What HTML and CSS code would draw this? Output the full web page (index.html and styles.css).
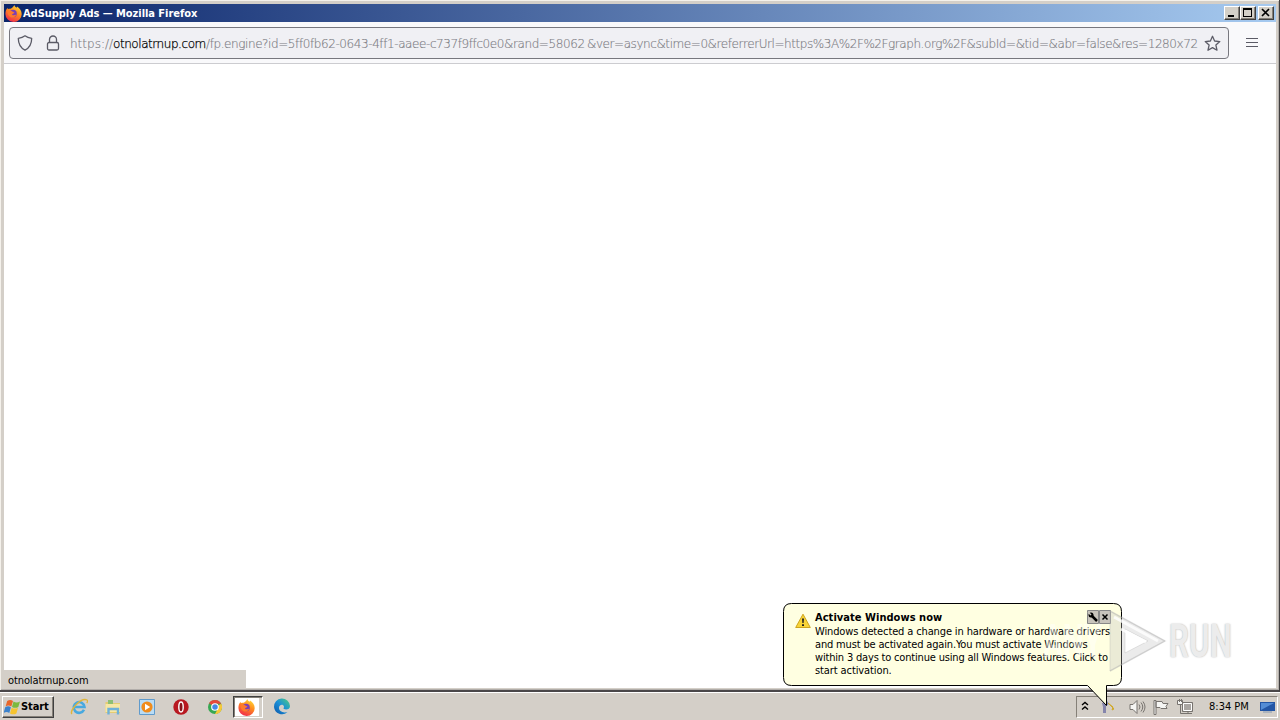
FILE: index.html
```html
<!DOCTYPE html>
<html lang="en">
<head>
<meta charset="utf-8">
<title>AdSupply Ads — Mozilla Firefox</title>
<link rel="stylesheet" href="styles.css">
</head>
<body>
<svg width="0" height="0" class="defs">
  <defs>
    <linearGradient id="fox" x1="0.8" y1="0" x2="0.3" y2="1"><stop offset="0" stop-color="#ffe03a"/><stop offset=".45" stop-color="#ff8a1e"/><stop offset="1" stop-color="#f0284f"/></linearGradient>
    <linearGradient id="edge" x1="0" y1="1" x2="1" y2="0"><stop offset="0" stop-color="#0b56a8"/><stop offset=".5" stop-color="#1b8fd8"/><stop offset="1" stop-color="#4fd07c"/></linearGradient>
    <symbol id="firefox" viewBox="0 0 16 16">
      <path d="M8.800 0c.3 1.300 1.200 2 2.300 2.600 0-.5 0-.9.2-1.200 2.700 1.600 4.400 4 4.400 7.100A7.600 7.400 0 0 1 8 16 7.600 7.600 0 0 1 .4 8.300C.4 6 1.200 4 2.400 2.700c0 .5.1.8.4 1.200.7-.4 1.500-.5 2.200-.3C5.700 3.400 7.800 2.200 8.800 0z" fill="url(#fox)"/>
      <circle cx="7.600" cy="8" r="3.500" fill="#7b3fb5"/>
      <path d="M2.500 5.500c2-.7 3.500-.2 4.800.8 1 .2 1.500.5 1.600 1-.8.8-2 .8-2.300 1.800 1.200.9 2.600.4 3.900 0-.7 2-2.600 2.900-4.400 2.600C3.500 11.200 2 8.500 2.500 5.500z" fill="#ff7a2b"/>
    </symbol>
  </defs>
</svg>
<div class="desktop">
  <div class="window">
    <header class="titlebar">
      <svg class="app-icon" width="17" height="17"><use href="#firefox"/></svg>
      <span class="title">AdSupply Ads — Mozilla Firefox</span>
      <div class="controls">
        <span class="ctl"><svg width="14" height="12"><path d="M3 8h6v2H3z"/></svg></span>
        <span class="ctl"><svg width="14" height="12"><path d="M2 1h9v9H2zM3 3v6h7V3z" fill-rule="evenodd"/></svg></span>
        <span class="ctl close"><svg width="14" height="12"><path d="M3 2l7 7M10 2L3 9" stroke="#000" stroke-width="1.700"/></svg></span>
      </div>
    </header>
    <nav class="toolbar">
      <div class="urlbar">
        <svg class="line-icon shield" width="16" height="16" viewBox="0 0 16 16"><path d="M8 .8C6 2.400 3.800 3 1.300 3.300c0 5 1 9 6.700 11.900 5.700-2.900 6.700-6.900 6.700-11.900C12.200 3 10 2.400 8 .8z"/></svg>
        <svg class="line-icon lock" width="14" height="16" viewBox="0 0 14 16"><rect x="1.500" y="7.500" width="11" height="7.500" rx="1.500"/><path d="M3.500 7.500V4.500a3.500 3.500 0 0 1 7 0v3"/></svg>
        <div class="url"><span class="scheme">https://</span><span class="host">otnolatrnup.com</span><span class="path">/fp.engine?id=5ff0fb62-0643-4ff1-aaee-c737f9ffc0e0&amp;rand=58062</span><span class="query">&amp;ver=async&amp;time=0&amp;referrerUrl=https%3A%2F%2Fgraph.org%2F&amp;subId=&amp;tid=&amp;abr=false&amp;res=1280x72</span></div>
        <svg class="line-icon star" width="17" height="17" viewBox="0 0 17 17"><path d="M8.500 1.300l2.100 4.700 5.200.6-3.900 3.500 1.100 5.100-4.500-2.600L4 15.200l1.100-5.100L1.200 6.600l5.200-.6z"/></svg>
      </div>
      <svg class="menu" width="12" height="10"><path d="M0 .5h12M0 4.500h12M0 8.500h12"/></svg>
    </nav>
    <main class="page"><div class="status"><span>otnolatrnup.com</span></div></main>
  </div>
  <footer class="taskbar">
    <div class="start">
      <svg width="17" height="16" viewBox="0 0 17 16"><path d="M3.200 2q3-2 5.800 0L7.300 7.500q-3-1.800-5.700 0z" fill="#e8662a"/><path d="M9.500 2.500q3 1.800 6.500 0L14.300 8q-3 1.700-6.300 0z" fill="#7cb93e"/><path d="M1.200 8.200q3-1.800 5.700 0L5.300 14q-2.800-2-5.700 0z" fill="#3c82cc"/><path d="M7.700 8.700q3 1.700 6.300 0L12.400 14.500q-3 1.700-6.400 0z" fill="#f6c42f"/></svg>
      <span>Start</span>
    </div>
    <div class="pins">
      <svg width="18" height="18" viewBox="0 0 18 18"><path d="M14 11.800A5.400 5.400 0 1 1 14.500 9H5" fill="none" stroke="#48a9df" stroke-width="2.600"/><path d="M2 16C-1 13 11-1 17 2c1 .6.500 2-.3 3" fill="none" stroke="#e0b53b" stroke-width="1.300"/></svg>
      <svg width="18" height="18" viewBox="0 0 18 18"><path d="M1.500 4h5l1 1h8.500v10H1.500z" fill="#e5cc72"/><path d="M4 2h5v4H4z" fill="#8dbf74"/><path d="M1.500 6h14.500v8H1.500z" fill="#f6e7a5"/><path d="M4.500 16.500v-5.500h9.500v5.500" fill="none" stroke="#6fb1d8" stroke-width="2.400"/></svg>
      <svg width="18" height="18" viewBox="0 0 18 18"><path d="M1.500 1.500h15v15h-15z" fill="#b9dcf5" stroke="#609bcc"/><circle cx="9" cy="9" r="5.600" fill="#f08c1c"/><path d="M7 5.700l5.200 3.300L7 12.300z" fill="#fff"/></svg>
      <svg width="18" height="18" viewBox="0 0 18 18"><circle cx="9" cy="9" r="7.700" fill="#b81820"/><ellipse cx="9" cy="9" rx="2.200" ry="5" fill="#87131a" stroke="#fff" stroke-width="1.400"/></svg>
      <svg width="18" height="18" viewBox="0 0 18 18"><circle cx="9" cy="9" r="7" fill="#36a852"/><path d="M9 9L3 5.300A7 7 0 0 1 15.200 5.800H9z" fill="#e5483b"/><path d="M9 9l6.300-3.200A7 7 0 0 1 9 16l3-5.500z" fill="#f7c838"/><circle cx="9" cy="9" r="3.300" fill="#4488e6" stroke="#fff" stroke-width="1.100"/></svg>
      <div class="active"><svg width="17" height="17"><use href="#firefox"/></svg></div>
      <svg width="18" height="18" viewBox="0 0 18 18"><path d="M1 9a8 8 0 0 1 16-1c.2 3.500-4 4-6 3-.9-.5 0-1.200 0-2.300C10.500 6 6.500 6.200 6 9.500c-.3 3.500 4 6 8.500 4.500A8 8 0 0 1 1 9z" fill="url(#edge)"/></svg>
    </div>
    <div class="tray">
      <svg class="chev" width="8" height="10"><path d="M1 4l3-2.500L7 4M1 8.500L4 6l3 2.500"/></svg>
      <svg class="keys" width="16" height="16" viewBox="0 0 16 16"><path d="M1 4l5-2 2 3-3 2v7H2V8z" fill="#8585ac"/><path d="M7 4l6 6-2 1 1-3z" fill="#f2cf39" stroke="#cfa92d"/></svg>
      <svg class="sound tray-icon" width="17" height="16" viewBox="0 0 17 16"><path d="M1 5.500h3l4-4v13l-4-4H1z"/><path d="M10 5.500q2 2.500 0 5M12 3.500q3.500 4.500 0 9M14 2.500q4 5.500 0 11" fill="none"/></svg>
      <svg class="flag tray-icon" width="16" height="16" viewBox="0 0 16 16"><path d="M1 1.500h2v14H1zM3 2.500h6l1 2h5l-2 3 1 2H8l-1-1H3z"/></svg>
      <svg class="net tray-icon" width="16" height="16" viewBox="0 0 16 16"><path d="M5.500 3.500h10v9h-10z" fill="#aaa6a2"/><path d="M6.500 4.500h8v7h-8z" class="inner"/><path d="M7 14.500h8M11 12.500v2M3.500 5.500v9H7" fill="none"/><path d="M.5 1.500h5v4h-5zM2.500 0v3M4.500 0v3"/></svg>
      <span class="clock">8:34 PM</span>
      <svg class="show" width="15" height="12" viewBox="0 0 15 12"><path d="M0 1h15v9H0z" fill="#2356a5"/><path d="M1 2h13L1 9z" fill="#548dd5"/><path d="M3 10h9v2H3z" fill="#adb4bd"/></svg>
    </div>
  </footer>
  <aside class="balloon">
    <svg class="shape" width="340" height="104"><path d="M8.500.5h322q8 0 8 8v66q0 8-8 8h-7v20l-19-20h-296q-8 0-8-8v-66q0-8 8-8z"/></svg>
    <svg class="warn" width="16" height="16" viewBox="0 0 16 16"><path d="M8 1.200L15.300 14.500H.7z" fill="#f8d437" stroke="#cda31d" stroke-linejoin="round"/><path d="M7 5.500h2l-.4 4.500H7.400zM7 11.200h2v1.900H7z" fill="#222"/></svg>
    <div class="message">
      <strong class="l0">Activate Windows now</strong>
      <span class="l1">Windows detected a change in hardware or hardware drivers</span>
      <span class="l2">and must be activated again.You must activate Windows</span>
      <span class="l3">within 3 days to continue using all Windows features. Click to</span>
      <span class="l4">start activation.</span>
    </div>
    <div class="tools">
      <svg width="12" height="14"><path d="M.5.500h11v13H.5z"/><path d="M4 5l6 6" stroke="#000" stroke-width="2.500"/><circle cx="4" cy="5" r="2.500" fill="#000" stroke="none"/><path d="M1 2l3 3" stroke="#c8c4bc" stroke-width="1.500"/></svg>
      <svg width="12" height="14"><path d="M.5.500h11v13H.5z"/><path d="M3.500 4.500l5 5M8.500 4.500l-5 5" stroke="#000" stroke-width="1.500"/></svg>
    </div>
  </aside>
  <div class="watermark">
    <span class="any">ANY</span>
    <svg width="62" height="64" viewBox="0 0 62 64"><path d="M3 2v60l55-30zM18 20v24l23-12z"/><path d="M7 8l44 24M14 20l25 13" class="hi"/><path d="M3 2l55 30L3 62" class="rim"/></svg>
    <span class="run">RUN</span>
  </div>
</div>
</body>
</html>
```
FILE: styles.css
```css
* { box-sizing: border-box; }
body { margin: 0; overflow: hidden; font-family: "DejaVu Sans Condensed", "DejaVu Sans", sans-serif; font-stretch: condensed; font-size: 11px; color: #000; }
svg { display: block; flex: none; }
.defs { position: absolute; }
.desktop { position: relative; width: 1280px; height: 720px; background: #d4cfc8; display: flex; flex-direction: column; overflow: hidden; }
.window { height: 692px; padding: 4px 3px 2px 4px; display: flex; flex-direction: column; border-right: 1px solid #403e3e; border-bottom: 2px solid #4a4749; box-shadow: inset 1px 1px #f4f1eb, inset -1px -1px #b2aeaa; }
.titlebar { height: 18px; display: flex; align-items: center; background: linear-gradient(90deg, #0a246a, #a6caf0); padding: 0 2px 0 1px; color: #fff; flex: none; }
.title { margin-left: 1px; font-weight: bold; letter-spacing: -0.05px; white-space: nowrap; }
.controls { margin-left: auto; display: flex; }
.ctl { width: 16px; height: 14px; background: #d4d0c8; border: 1px solid; border-color: #fff #404040 #404040 #fff; box-shadow: inset -1px -1px #858078; }
.close { margin-left: 2px; }
.toolbar { height: 42px; display: flex; align-items: center; background: #f9f9fb; border-bottom: 1px solid #ccccd0; padding-left: 5px; flex: none; }
.urlbar { width: 1220px; height: 32px; display: flex; align-items: center; background: #f0f0f4; border: 1px solid #77777e; border-radius: 4px; padding: 1px 7px 0; }
.line-icon { fill: none; stroke: #5b5b66; stroke-width: 1.3; stroke-linejoin: round; }
.lock { margin-left: 13px; }
.url { margin-left: 10px; width: 1129px; overflow: hidden; white-space: nowrap; display: flex; font-family: "DejaVu Sans", sans-serif; font-stretch: normal; font-weight: 200; font-size: 12px; color: #7c7c83; -webkit-text-stroke: .15px; line-height: 20px; padding-top: 1px; }
.url span { flex: none; }
.scheme { width: 43px; letter-spacing: 0; }
.host { width: 93px; color: #000; letter-spacing: -0.44px; -webkit-text-stroke: .25px #000; }
.path { width: 381px; letter-spacing: -0.41px; }
.query { letter-spacing: -0.43px; }
.star { margin-left: 5px; }
.menu { margin-left: 17px; stroke: #5b5b66; }
.page { flex: 1; background: #fff; display: flex; align-items: flex-end; }
.status { width: 242px; height: 18px; background: #d4cfc8; padding: 4px 3px 0 4px; line-height: 13px; letter-spacing: -.1px; }
.taskbar { height: 28px; display: flex; align-items: center; border-top: 1px solid #fff; padding: 0 2px; }
.start { width: 52px; height: 22px; display: flex; align-items: center; padding-left: 1px; font-weight: bold; border: 1px solid; border-color: #fff #404040 #404040 #fff; box-shadow: inset -1px -1px #858078; letter-spacing: -.1px; }
.pins { display: flex; align-items: center; margin-left: 16px; gap: 15.9px; }
.active { width: 30px; height: 22px; background: #fff; border: 1px solid; border-color: #404040 #fff #fff #404040; box-shadow: inset 1px 1px #858078, inset -3px -1px #d4cfc8; padding: 2px 0 0 4px; margin: 0 -6px; }
.tray { margin-left: auto; width: 202px; height: 22px; display: flex; align-items: center; border: 1px solid; border-color: #858078 #fff #fff #858078; padding-left: 4px; }
.chev { fill: none; stroke: #000; stroke-width: 1.4; margin-bottom: 2px; }
.keys { margin-left: 12px; }
.sound { margin-left: 12px; }
.tray-icon { fill: #f5f5f3; stroke: #77736f; }
.inner { fill: none; stroke: #fff; }
.flag { margin-left: 7px; }
.net { margin-left: 8px; }
.clock { margin-left: 16px; width: 51px; white-space: nowrap; letter-spacing: 0; }
.balloon { position: absolute; left: 783px; top: 603px; width: 340px; height: 104px; display: flex; padding: 8px 0 0 12px; }
.shape { position: absolute; left: 0; top: 0; fill: #ffffe1; stroke: #000; }
.warn { position: relative; margin-top: 2px; }
.message { position: relative; margin-left: 4px; width: 272px; display: flex; flex-direction: column; line-height: 13px; white-space: nowrap; }
.l0 { height: 14px; letter-spacing: .04px; }
.l1 { letter-spacing: -.13px; }
.l2 { letter-spacing: -.16px; }
.l3 { letter-spacing: -.18px; }
.l4 { letter-spacing: -.1px; }
.tools { position: relative; display: flex; margin-top: -1px; fill: #c8c4bc; stroke: #888; }
.watermark { position: absolute; left: 1043px; top: 609px; display: flex; align-items: center; font-family: Roboto, sans-serif; font-stretch: normal; font-size: 46px; line-height: 64px; font-weight: bold; color: rgba(255,255,255,.45); }
.watermark svg { fill: rgba(190,190,190,.3); fill-rule: evenodd; stroke: rgba(170,170,170,.3); }
.watermark .hi { stroke: rgba(255,255,255,.8); stroke-width: 3; fill: none; }
.watermark .rim { stroke: rgba(175,175,175,.35); stroke-width: 1.5; fill: none; }
.any { width: 64px; transform: scaleX(.65); transform-origin: left; }
.run { width: 64px; color: #ececec; transform: scaleX(.68); transform-origin: left; text-shadow: 0 0 2px #aaa; }
```
